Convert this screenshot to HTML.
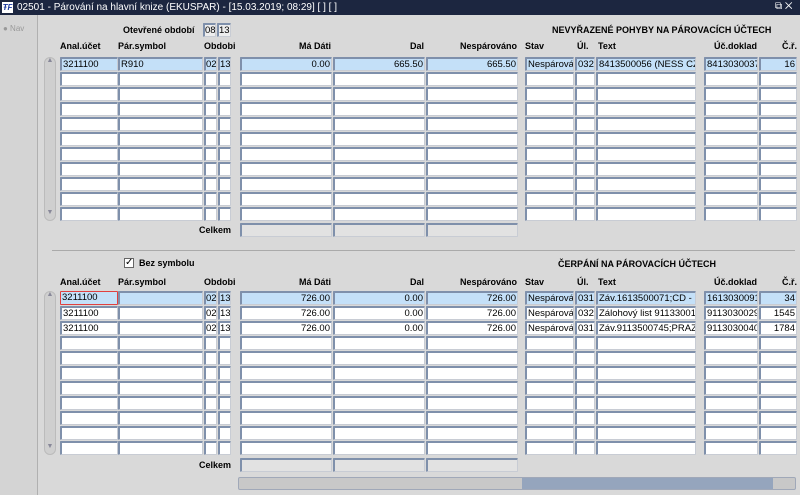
<!DOCTYPE html>
<html><head><meta charset="utf-8"><style>
*{margin:0;padding:0;box-sizing:border-box}
body{width:800px;height:495px;overflow:hidden;background:#d9d9d9;font-family:"Liberation Sans",sans-serif;font-size:9px;color:#000;position:relative}
.a{position:absolute}
.t{position:absolute;white-space:nowrap;font-weight:bold;font-size:9px}
.c{position:absolute;height:14px;background:#fff;border:1px solid #c8ccd4;border-top:2px solid #7f90ab;border-left:2px solid #7f90ab;border-radius:1px;font-size:9.5px;line-height:12px;padding:0 1px;white-space:nowrap;overflow:hidden}
.h{background:#c4e0f8}
.g{background:#e2e2e2}
.r{text-align:right}
</style></head><body>
<div class="a" style="left:0;top:0;width:800px;height:15px;background:#1c2640"></div>
<div class="a" style="left:2px;top:2px;width:11px;height:11px;background:#fff;color:#1a3aa0;font-size:8px;font-weight:bold;font-style:italic;line-height:11px;text-align:center">ŦF</div>
<div class="a" style="left:17px;top:1px;color:#fff;font-size:10px;line-height:13px;white-space:nowrap">02501 - Párování na hlavní knize (EKUSPAR) - [15.03.2019; 08:29] [ ] [ ]</div>
<div class="a" style="left:775px;top:0;color:#fff;font-size:10px;line-height:14px">⧉ ✕</div>
<div class="a" style="left:0;top:15px;width:38px;height:480px;background:#d4d4d4;border-right:1px solid #b0b0b0"></div>
<div class="a" style="left:3px;top:24px;color:#999;font-size:8px">● Nav</div>
<div class="t" style="left:123px;top:25px">Otevřené období</div>
<div class="c" style="left:203px;top:23px;width:13px;background:#eee;padding:0">08</div>
<div class="c" style="left:217px;top:23px;width:14px;background:#eee;padding:0">13</div>
<div class="t" style="left:552px;top:25px">NEVYŘAZENÉ POHYBY NA PÁROVACÍCH ÚČTECH</div>
<div class="a" style="left:52px;top:250px;width:743px;height:1px;background:#aaa"></div>
<div class="a" style="left:124px;top:258px;width:10px;height:10px;background:#fff;border:1px solid #666;font-size:10px;line-height:8px;text-align:center">✓</div>
<div class="t" style="left:139px;top:258px">Bez symbolu</div>
<div class="t" style="left:558px;top:259px">ČERPÁNÍ NA PÁROVACÍCH ÚČTECH</div>
<div class="a" style="left:238px;top:477px;width:558px;height:13px;background:#c8c8c8;border:1px solid #a0a8b8;border-radius:2px"></div>
<div class="a" style="left:522px;top:478px;width:251px;height:11px;background:#95a5bd"></div>
<div id="root"></div>
<script>
var cols=[[60,58],[118,85],[204,13],[218,13],[240,92],[333,92],[426,92],[525,49],[575,20],[596,100],[704,54],[759,38]];
var ra=[0,0,0,0,1,1,1,0,0,0,1,1];
function block(y0,hy,data,hl,cy){
 var h="";
 [[60,"Anal.účet"],[118,"Pár.symbol"],[204,"Obdobi"],[525,"Stav"],[577,"Úl."],[598,"Text"]].forEach(function(p){h+='<div class="t" style="left:'+p[0]+'px;top:'+hy+'px">'+p[1]+'</div>'});
 [[331,"Má Dáti"],[424,"Dal"],[517,"Nespárováno"],[757,"Úč.doklad"],[797,"Č.ř."]].forEach(function(p){h+='<div class="t" style="right:'+(800-p[0])+'px;top:'+hy+'px">'+p[1]+'</div>'});
 for(var r=0;r<11;r++){var y=y0+r*15;var d=data[r]||[];
  for(var i=0;i<cols.length;i++){var cls="c"+(ra[i]?" r":"")+(r==0&&(hl||i>0)?" h":"");
   var st='left:'+cols[i][0]+'px;top:'+y+'px;width:'+cols[i][1]+'px;';
   if(i==2||i==3)st+='padding:0;';
   if(r==0&&!hl&&i==0)st+='border:1px solid #e04040;background:#c4e0f8;';
   h+='<div class="'+cls+'" style="'+st+'">'+(d[i]||"")+'</div>';}}
 h+='<div class="a" style="left:44px;top:'+y0+'px;width:12px;height:164px;background:#cfcfcf;border-radius:6px;border:1px solid #bbb"></div>';
 h+='<div class="a" style="left:44px;top:'+y0+'px;width:12px;height:11px;font-size:7px;text-align:center;color:#889">▲</div>';
 h+='<div class="a" style="left:44px;top:'+(y0+152)+'px;width:12px;height:11px;font-size:7px;text-align:center;color:#889">▼</div>';
 h+='<div class="t" style="left:199px;top:'+(cy+2)+'px">Celkem</div>';
 [4,5,6].forEach(function(i){h+='<div class="c g" style="left:'+cols[i][0]+'px;top:'+cy+'px;width:'+cols[i][1]+'px"></div>'});
 return h;}
var blkA=block(57,41,[["3211100","R910","02","13","0.00","665.50","665.50","Nespárován","032","8413500056 (NESS CZEC","8413030037","16"]],true,223);
var blkB=block(291,277,[["3211100","","02","13","726.00","0.00","726.00","Nespárován","031","Záv.1613500071;CD - INF","1613030091","34"],["3211100","","02","13","726.00","0.00","726.00","Nespárován","032","Zálohový list 91133001210","9113030029","1545"],["3211100","","02","13","726.00","0.00","726.00","Nespárován","031","Záv.9113500745;PRAZSK","9113030040","1784"]],false,458);
document.getElementById("root").innerHTML=blkA+blkB;
</script>
</body></html>
